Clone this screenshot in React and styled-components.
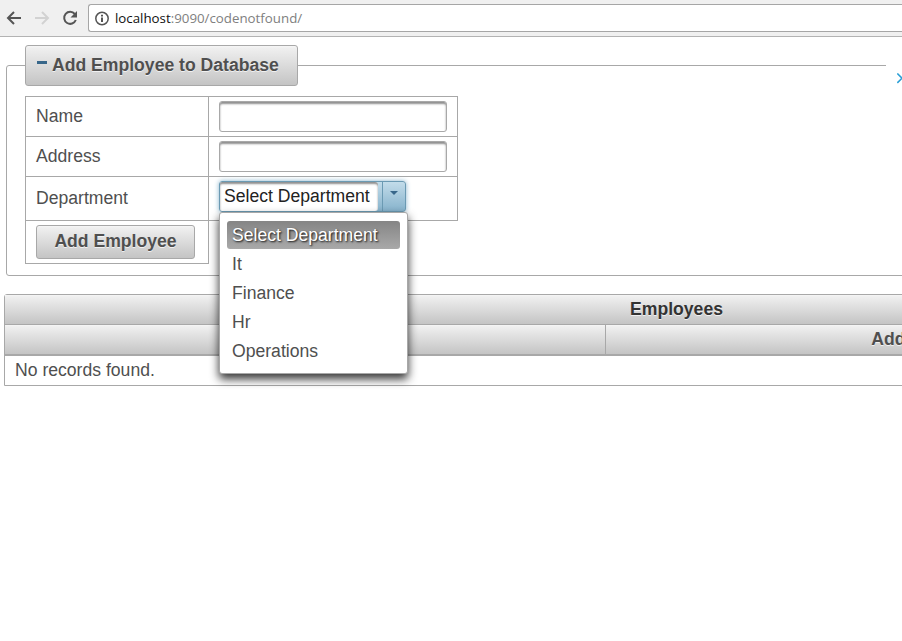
import React from "react";
import styled, { createGlobalStyle, css } from "styled-components";

const GlobalStyle = createGlobalStyle`
  * { box-sizing: border-box; }
  html, body { margin: 0; padding: 0; }
  body { background: #fff; overflow: hidden; }
`;

const line = "#a8a8a8";
const greyFill = css`
  background: linear-gradient(to bottom, #f6f6f6 0%, #efefef 6%, #c4c4c4 100%);
`;

const Page = styled.div`
  width: 902px;
  height: 641px;
  overflow: hidden;
  position: relative;
  background: #fff;
  color: #4f4f4f;
  font-family: "Liberation Sans", Arial, sans-serif;
  font-size: 17.6px;
  line-height: 20px;
`;

const BrowserBar = styled.header`
  display: flex;
  height: 37px;
  padding: 4px 0 0 6px;
  background: #f0f0f0;
  border-bottom: 1px solid #b3b3b3;
`;

const NavButtons = styled.div`
  display: flex;
  gap: 12px;
  width: 82px;
  padding-top: 6px;
`;

const AddressBox = styled.div`
  display: flex;
  align-items: center;
  flex: 1;
  height: 28px;
  padding-left: 6px;
  border: 1px solid #a6a6a6;
  border-right: 0;
  border-radius: 3px 0 0 3px;
  background: #fff;
`;

const Url = styled.span`
  margin-left: 5px;
  font-family: "Open Sans", sans-serif;
  font-size: 13.3px;
  line-height: 18px;
  color: #808080;
  white-space: nowrap;
`;

const Host = styled.span`
  color: #111;
`;

const Fieldset = styled.fieldset`
  width: 920px;
  height: 231px;
  margin: 8px 0 0 6px;
  padding: 10px 18px 0;
  border: 1px solid ${line};
  border-radius: 3px;
`;

const Legend = styled.legend`
  display: flex;
  align-items: center;
  width: 273px;
  height: 41px;
  padding: 0 0 1px 11px;
  border: 1px solid ${line};
  border-radius: 3px;
  ${greyFill}
  font-weight: bold;
  text-shadow: 0 1px 0 rgba(255, 255, 255, 0.7);
  white-space: nowrap;
`;

const Minus = styled.span`
  width: 10px;
  height: 3px;
  margin: -5px 5px 0 0;
  background: #38678a;
`;

const FormRow = styled.div`
  display: flex;
  height: ${(p) => p.$height}px;
  margin-bottom: -1px;
`;

const Cell = styled.div`
  display: flex;
  align-items: ${(p) => (p.$top ? "flex-start" : "center")};
  width: ${(p) => p.$width}px;
  margin-right: -1px;
  padding: ${(p) => (p.$top ? "4px 0 0 10px" : "0 0 2px 10px")};
  border: 1px solid ${line};
`;

const TextInput = styled.input`
  width: 228px;
  height: 31px;
  padding: 4px;
  border: 1px solid ${line};
  border-radius: 3px;
  background: #fff;
  box-shadow: inset 0 2px 2px #8f8f8f;
  outline: none;
`;

const Button = styled.button`
  width: 159px;
  height: 34px;
  padding: 0 0 2px;
  border: 1px solid ${line};
  border-radius: 3px;
  ${greyFill}
  color: #4f4f4f;
  font: bold 17.6px/20px "Liberation Sans", Arial, sans-serif;
  text-shadow: 0 1px 0 rgba(255, 255, 255, 0.7);
`;

const SelectBox = styled.div`
  position: relative;
  display: flex;
  width: 187px;
  height: 31px;
  border: 1px solid #6b9ab3;
  border-radius: 3px;
  background: linear-gradient(to bottom, #c2dcea, #87b3cc);
  box-shadow: 0 0 5px #85b2cb;
`;

const SelectValue = styled.div`
  width: 158px;
  flex: none;
  height: 29px;
  padding: 4px 0 0 4px;
  border-radius: 2px 3px 3px 2px;
  background: #fff;
  box-shadow: inset 0 2px 2px #8f8f8f;
  color: #222;
  white-space: nowrap;
`;

const SelectTrigger = styled.div`
  width: 23px;
  flex: none;
  margin-left: 4px;
  padding: 9px 0 0 7px;
  border-left: 1px solid #6b9ab3;
`;

const Caret = styled.div`
  width: 8px;
  border: 4px solid transparent;
  border-top-color: #38678a;
  border-bottom: 0;
`;

const Menu = styled.ul`
  position: absolute;
  z-index: 2;
  top: 30px;
  left: -1px;
  width: 189px;
  height: 162px;
  margin: 0;
  padding: 8px 7px;
  border: 1px solid ${line};
  border-radius: 3px;
  background: #fff;
  box-shadow: 0 5px 10px rgba(0, 0, 0, 0.8);
  list-style: none;
`;

const Option = styled.li`
  height: 28px;
  margin-bottom: 1px;
  padding: 4px 5px;
  border-radius: 3px;
  white-space: nowrap;
  ${(p) =>
    p.$active &&
    css`
      background: linear-gradient(to bottom, #858585, #a9a9a9);
      color: #fff;
      text-shadow: 1px 1px 2px rgba(0, 0, 0, 0.9);
    `}
`;

const DataTable = styled.section`
  width: 1345px;
  margin: 18px 0 0 4px;
  border: 1px solid ${line};
  border-radius: 3px 3px 0 0;
`;

const Title = styled.div`
  height: 30px;
  padding-top: 4px;
  border-bottom: 1px solid ${line};
  ${greyFill}
  color: #333;
  font-weight: bold;
  text-align: center;
  text-shadow: 0 1px 0 rgba(255, 255, 255, 0.7);
`;

const Columns = styled.div`
  display: grid;
  grid-template-columns: 601px 602px 140px;
  height: 31px;
  border-bottom: 2px solid ${line};
`;

const Column = styled.div`
  padding-top: 4px;
  border-right: 1px solid ${line};
  ${greyFill}
  font-weight: bold;
  text-align: center;
  text-shadow: 0 1px 0 rgba(255, 255, 255, 0.7);
`;

const Empty = styled.div`
  height: 29px;
  padding: 4px 10px;
`;

const SideTab = styled.div`
  position: absolute;
  top: 60px;
  right: 0;
  width: 16px;
  height: 36px;
  padding: 13px 0 0 11px;
  background: #fff;
  overflow: hidden;
`;

const Icon = styled.svg`
  display: block;
  flex: none;
`;

const departments = ["Select Department", "It", "Finance", "Hr", "Operations"];

function ArrowIcon({ color, flip }) {
  return (
    <Icon width="16" height="16" viewBox="0 0 16 16" fill="none" stroke={color} strokeWidth="2">
      <path d={flip ? "M1 8h13M8 2l6 6-6 6" : "M15 8H2M8 2L2 8l6 6"} />
    </Icon>
  );
}

function ReloadIcon() {
  return (
    <Icon width="16" height="16" viewBox="0 0 16 16">
      <path d="M12.8 4A6 6 0 1 0 13.8 10" fill="none" stroke="#555" strokeWidth="2" />
      <path d="M15 1v6.5H8.5z" fill="#555" />
    </Icon>
  );
}

function InfoIcon() {
  return (
    <Icon width="15" height="15" viewBox="0 0 15 15">
      <circle cx="7" cy="7.5" r="6.2" fill="none" stroke="#555" strokeWidth="1.5" />
      <path d="M7 6.5V11M7 3.8v1.7" stroke="#555" strokeWidth="2" />
    </Icon>
  );
}

function DepartmentSelect() {
  return (
    <SelectBox>
      <SelectValue>{departments[0]}</SelectValue>
      <SelectTrigger>
        <Caret />
      </SelectTrigger>
      <Menu>
        {departments.map((name, i) => (
          <Option key={name} $active={i === 0}>{name}</Option>
        ))}
      </Menu>
    </SelectBox>
  );
}

export default function App() {
  return (
    <Page>
      <GlobalStyle />
      <BrowserBar>
        <NavButtons>
          <ArrowIcon color="#555" />
          <ArrowIcon color="#d2d2d2" flip />
          <ReloadIcon />
        </NavButtons>
        <AddressBox>
          <InfoIcon />
          <Url><Host>localhost</Host>:9090/codenotfound/</Url>
        </AddressBox>
      </BrowserBar>
      <Fieldset>
        <Legend><Minus />Add Employee to Database</Legend>
        <FormRow $height={41}>
          <Cell $width={184}>Name</Cell>
          <Cell $width={250} $top><TextInput aria-label="Name" /></Cell>
        </FormRow>
        <FormRow $height={41}>
          <Cell $width={184}>Address</Cell>
          <Cell $width={250} $top><TextInput aria-label="Address" /></Cell>
        </FormRow>
        <FormRow $height={45}>
          <Cell $width={184}>Department</Cell>
          <Cell $width={250} $top><DepartmentSelect /></Cell>
        </FormRow>
        <FormRow $height={44}>
          <Cell $width={184} $top><Button>Add Employee</Button></Cell>
        </FormRow>
      </Fieldset>
      <DataTable>
        <Title>Employees</Title>
        <Columns>
          <Column />
          <Column>Address</Column>
          <Column />
        </Columns>
        <Empty>No records found.</Empty>
      </DataTable>
      <SideTab>
        <Icon width="8" height="11" viewBox="0 0 8 11" fill="none" stroke="#2a9fd6" strokeWidth="1.6">
          <path d="M.3.5L5 5.2 .3 9.9" />
        </Icon>
      </SideTab>
    </Page>
  );
}
